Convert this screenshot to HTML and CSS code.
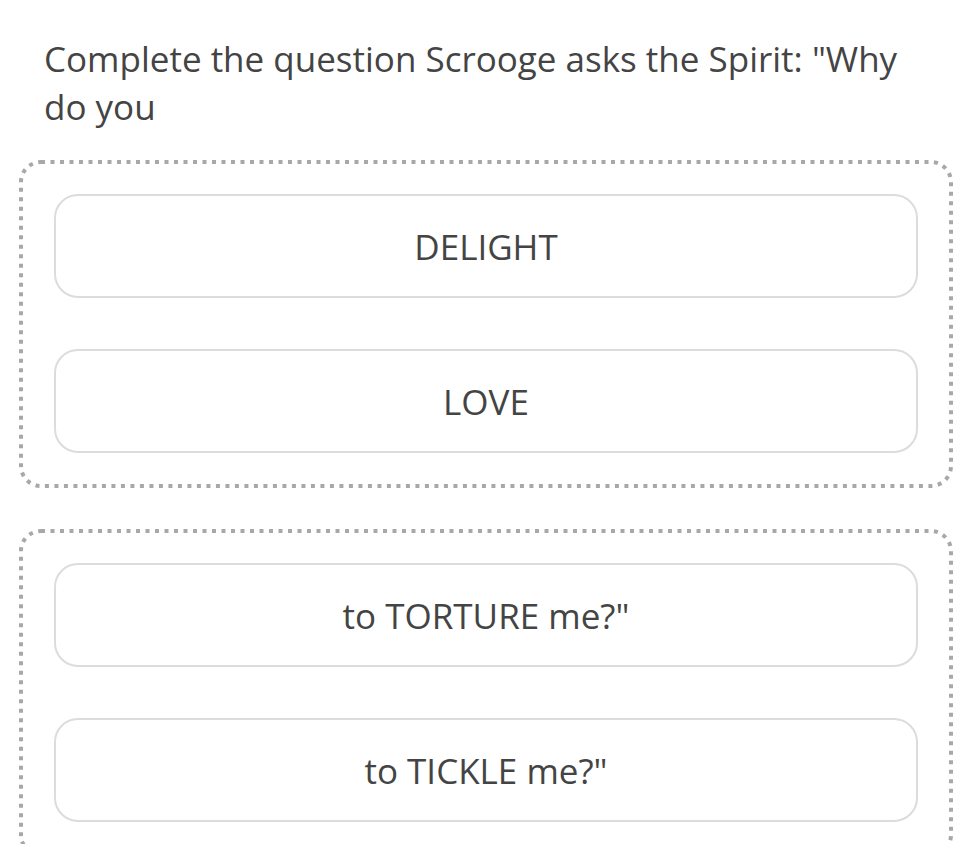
FILE: index.html
```html
<!DOCTYPE html>
<html lang="en">
<head>
    <meta charset="UTF-8">
    <meta name="viewport" content="width=device-width, initial-scale=1.0">
    <title>Scrooge</title>
    <link rel="stylesheet" href="styles.css">
</head>
<body>
    <div class="quiz">
        <h1 class="question">Complete the question Scrooge asks the Spirit: "Why do you</h1>

        <div class="group">
            <svg class="frame" aria-hidden="true"><rect></rect></svg>
            <button class="choice">DELIGHT</button>
            <button class="choice">LOVE</button>
        </div>

        <div class="group">
            <svg class="frame" aria-hidden="true"><rect></rect></svg>
            <button class="choice">to TORTURE me?"</button>
            <button class="choice">to TICKLE me?"</button>
        </div>
    </div>
</body>
</html>
```

FILE: styles.css
```css
/* Page */
body {
    margin: 0;
    padding: 0;
    background: #fff;
    color: #444;
    font-family: 'Open Sans', 'Noto Sans', sans-serif;
}

.quiz {
    padding: 0 18px 40px 19px;
}

/* Question */
.question {
    margin: 0;
    padding: 35px 25px 29px 25px;
    font-size: 35px;
    font-weight: normal;
    line-height: 48px;
}

/* Dotted answer group */
.group {
    position: relative;
    display: flex;
    flex-direction: column;
    gap: 51px;
    padding: 34px 35px 35px 35px;
    margin-bottom: 41px;
}

.frame {
    position: absolute;
    top: 0;
    left: 0;
    width: 100%;
    height: 100%;
    overflow: visible;
    pointer-events: none;
}

.frame rect {
    x: 2px;
    y: 2px;
    width: calc(100% - 4px);
    height: calc(100% - 4px);
    rx: 20px;
    fill: none;
    stroke: #a8a8a8;
    stroke-width: 4;
    stroke-dasharray: 4 5.5;
}

/* Answer buttons */
.choice {
    height: 104px;
    border: 2px solid #dcdcdc;
    border-radius: 24px;
    background: #fff;
    color: #444;
    font-family: inherit;
    font-size: 35px;
    cursor: pointer;
}
```
